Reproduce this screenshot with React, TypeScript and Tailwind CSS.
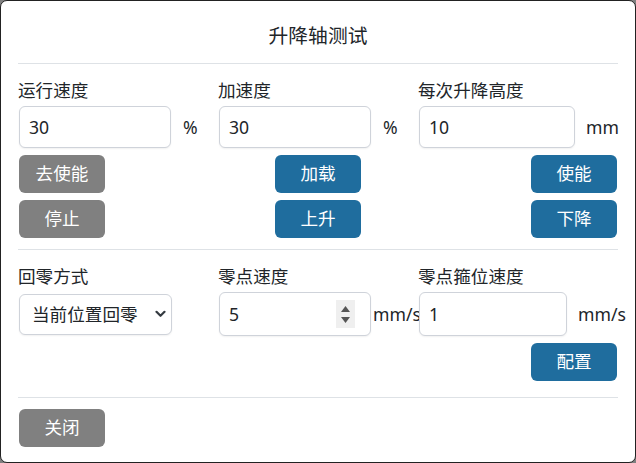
import React from "react";

const font = "font-['Noto_Sans','Noto_Sans_CJK_SC',sans-serif]";

function TextInput({ value, w }: { value: string; w: string }) {
  return (
    <input
      type="text"
      defaultValue={value}
      className={`${w} h-[42px] shrink-0 rounded-[6px] border border-[#cfd3da] bg-white pl-[9px] text-[17.6px] text-[#212529] shadow-[0_1px_2px_rgba(0,0,0,0.06)] outline-none ${font}`}
    />
  );
}

function Btn({ children, gray }: { children: React.ReactNode; gray?: boolean }) {
  return (
    <button
      className={`flex h-[38px] w-[86px] items-center justify-center rounded-[6px] text-[17.6px] leading-none text-white ${
        gray ? "bg-[#808080]" : "bg-[#1f6d9e]"
      } ${font}`}
    >
      {children}
    </button>
  );
}

function Label({ children }: { children: React.ReactNode }) {
  return <div className="h-[26px] text-[17.6px] leading-[26px] text-[#212529]">{children}</div>;
}

export default function App() {
  return (
    <div className={`h-[463px] w-[636px] bg-[#808080] ${font}`}>
      <div className="flex h-[463px] w-[636px] flex-col rounded-[7px] border border-[#222] bg-white px-[17px]">
        {/* header */}
        <div className="flex h-[63px] justify-center border-b border-[#dee2e6] pt-[20px]">
          <div className="text-[19.8px] leading-[30px] text-[#212529]">升降轴测试</div>
        </div>

        {/* section 1 */}
        <div className="grid grid-cols-3 pt-[13px]">
          <div>
            <Label>运行速度</Label>
            <div className="ml-px mt-[3px] flex items-center">
              <TextInput value="30" w="w-[152px]" />
              <span className="ml-[12px] text-[17.6px] text-[#212529]">%</span>
            </div>
          </div>
          <div>
            <Label>加速度</Label>
            <div className="ml-px mt-[3px] flex items-center">
              <TextInput value="30" w="w-[152px]" />
              <span className="ml-[12px] text-[17.6px] text-[#212529]">%</span>
            </div>
          </div>
          <div>
            <Label>每次升降高度</Label>
            <div className="ml-px mt-[3px] flex items-center">
              <TextInput value="10" w="w-[156px]" />
              <span className="ml-[11px] text-[17.6px] text-[#212529]">mm</span>
            </div>
          </div>
        </div>

        <div className="mt-[7px] grid grid-cols-3">
          <div className="flex flex-col items-start gap-[7px] pl-px">
            <Btn gray>去使能</Btn>
            <Btn gray>停止</Btn>
          </div>
          <div className="flex flex-col items-center gap-[7px]">
            <Btn>加载</Btn>
            <Btn>上升</Btn>
          </div>
          <div className="flex flex-col items-end gap-[7px] pr-px">
            <Btn>使能</Btn>
            <Btn>下降</Btn>
          </div>
        </div>

        <div className="mt-[11px] border-b border-[#dee2e6]" />

        {/* section 2 */}
        <div className="grid grid-cols-3 pt-[13px]">
          <div>
            <Label>回零方式</Label>
            <div className="relative ml-px mt-[5px] h-[41px] w-[153px] rounded-[6px] border border-[#cfd3da] bg-white shadow-[0_1px_2px_rgba(0,0,0,0.06)]">
              <div className="pl-[12px] text-[17.6px] leading-[39px] text-[#212529]">当前位置回零</div>
              <svg
                className="absolute right-[5px] top-[15px]"
                width="11"
                height="8"
                viewBox="0 0 11 8"
                fill="none"
              >
                <path d="M1.5 1.8 L5.5 5.8 L9.5 1.8" stroke="#343a40" strokeWidth="2.2" strokeLinecap="round" strokeLinejoin="round" />
              </svg>
            </div>
          </div>
          <div>
            <Label>零点速度</Label>
            <div className="ml-px mt-[3px] flex items-center">
              <div className="relative">
                <input
                  type="text"
                  defaultValue="5"
                  className={`h-[44px] w-[152px] rounded-[6px] border border-[#cfd3da] bg-white pl-[9px] text-[17.6px] text-[#212529] shadow-[0_1px_2px_rgba(0,0,0,0.06)] outline-none ${font}`}
                />
                <div className="absolute left-[117px] top-[8px] flex h-[28px] w-[19px] flex-col items-center justify-center gap-[5px] bg-[#efefef]">
                  <svg width="9" height="6" viewBox="0 0 9 6">
                    <path d="M0 6 L4.5 0 L9 6 Z" fill="#555" />
                  </svg>
                  <svg width="9" height="6" viewBox="0 0 9 6">
                    <path d="M0 0 L9 0 L4.5 6 Z" fill="#555" />
                  </svg>
                </div>
              </div>
              <span className="ml-[2px] whitespace-nowrap text-[17.6px] text-[#212529]">mm/s</span>
            </div>
          </div>
          <div>
            <Label>零点箍位速度</Label>
            <div className="ml-px mt-[3px] flex items-center">
              <input
                type="text"
                defaultValue="1"
                className={`h-[44px] w-[148px] shrink-0 rounded-[6px] border border-[#cfd3da] bg-white pl-[9px] text-[17.6px] text-[#212529] shadow-[0_1px_2px_rgba(0,0,0,0.06)] outline-none ${font}`}
              />
              <span className="ml-[11px] whitespace-nowrap text-[17.6px] text-[#212529]">mm/s</span>
            </div>
          </div>
        </div>

        <div className="mt-[7px] flex justify-end pr-px">
          <Btn>配置</Btn>
        </div>

        <div className="mt-[16px] border-b border-[#dee2e6]" />

        <div className="mt-[11px] pl-px">
          <Btn gray>关闭</Btn>
        </div>
      </div>
    </div>
  );
}
